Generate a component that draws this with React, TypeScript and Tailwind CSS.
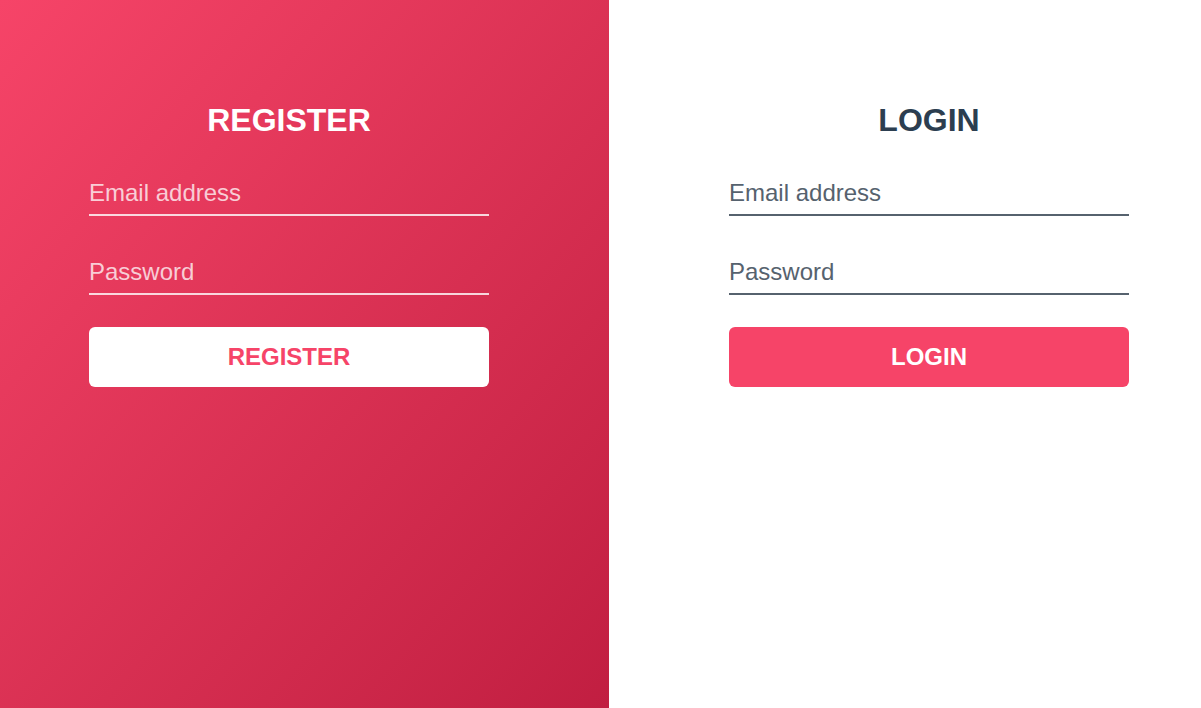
import React, { useState } from "react";

const App: React.FC = () => {
  const [regEmail, setRegEmail] = useState("");
  const [regPassword, setRegPassword] = useState("");
  const [loginEmail, setLoginEmail] = useState("");
  const [loginPassword, setLoginPassword] = useState("");

  return (
    <div className="flex min-h-[708px] w-full font-['Liberation_Sans',Arial,sans-serif]">
      {/* register side, gradient panel */}
      <div className="w-[609px] shrink-0 bg-gradient-to-br from-[#f64468] to-[#c11e41] pl-[89px] pt-[102px]">
        <form className="flex w-[400px] flex-col" onSubmit={(e) => e.preventDefault()}>
          <h1 className="text-center text-[32px] font-bold leading-[36px] text-white">
            REGISTER
          </h1>
          <input
            type="email"
            value={regEmail}
            onChange={(e) => setRegEmail(e.target.value)}
            placeholder="Email address"
            className="mt-[36px] h-[42px] border-b-2 border-white/80 bg-transparent pb-[3px] text-[24px] text-white outline-none placeholder:text-white/75"
          />
          <input
            type="password"
            value={regPassword}
            onChange={(e) => setRegPassword(e.target.value)}
            placeholder="Password"
            className="mt-[37px] h-[42px] border-b-2 border-white/80 bg-transparent pb-[3px] text-[24px] text-white outline-none placeholder:text-white/75"
          />
          <button
            type="submit"
            className="mt-[32px] h-[60px] rounded-md bg-white text-[24px] font-bold text-[#f64468]"
          >
            REGISTER
          </button>
        </form>
      </div>

      {/* login side */}
      <div className="flex-1 bg-white pl-[120px] pt-[102px]">
        <form className="flex w-[400px] flex-col" onSubmit={(e) => e.preventDefault()}>
          <h1 className="text-center text-[32px] font-bold leading-[36px] text-[#2c3e50]">
            LOGIN
          </h1>
          <input
            type="email"
            value={loginEmail}
            onChange={(e) => setLoginEmail(e.target.value)}
            placeholder="Email address"
            className="mt-[36px] h-[42px] border-b-2 border-[#56626e] bg-transparent pb-[3px] text-[24px] text-[#2c3e50] outline-none placeholder:text-[#56626e]"
          />
          <input
            type="password"
            value={loginPassword}
            onChange={(e) => setLoginPassword(e.target.value)}
            placeholder="Password"
            className="mt-[37px] h-[42px] border-b-2 border-[#56626e] bg-transparent pb-[3px] text-[24px] text-[#2c3e50] outline-none placeholder:text-[#56626e]"
          />
          <button
            type="submit"
            className="mt-[32px] h-[60px] rounded-md bg-[#f64468] text-[24px] font-bold text-white"
          >
            LOGIN
          </button>
        </form>
      </div>
    </div>
  );
};

export default App;
